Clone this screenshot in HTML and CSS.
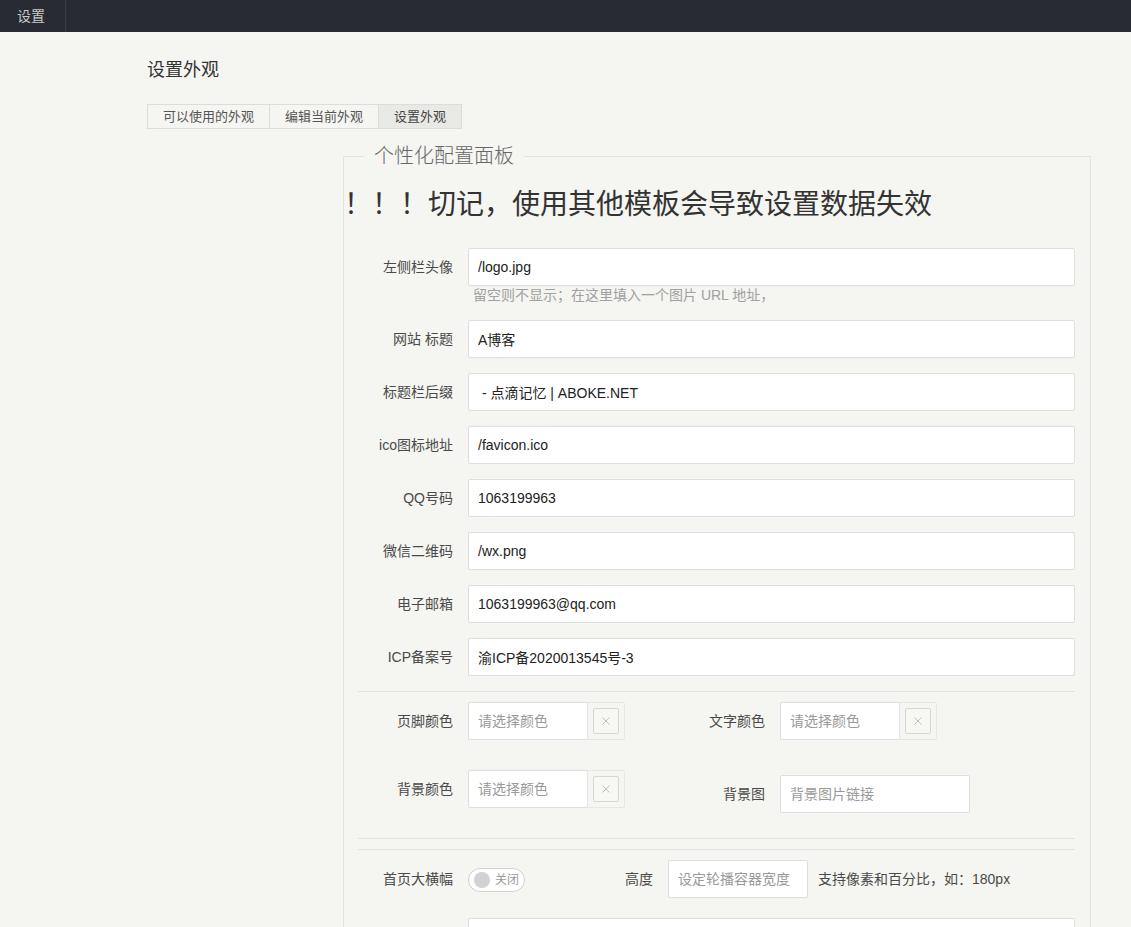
FILE: index.html
```html
<!DOCTYPE html>
<html lang="zh-CN">
<head>
<meta charset="utf-8">
<title>设置外观</title>
<link rel="stylesheet" href="styles.css">
</head>
<body>
<header class="topbar">
  <nav class="topnav"><a class="topnav-item">设置</a></nav>
</header>
<main class="main">
  <h2 class="page-title">设置外观</h2>
  <ul class="tabs">
    <li class="tab">可以使用的外观</li>
    <li class="tab">编辑当前外观</li>
    <li class="tab active">设置外观</li>
  </ul>
  <fieldset class="panel">
    <legend class="panel-legend">个性化配置面板</legend>
    <h1 class="warning">！！！切记，使用其他模板会导致设置数据失效</h1>
    <form class="panel-body">
      <div class="form-item first">
        <label class="form-label">左侧栏头像</label>
        <div class="input-block">
          <input class="input" value="/logo.jpg">
          <p class="help">留空则不显示；在这里填入一个图片 URL 地址，</p>
        </div>
      </div>
      <div class="form-item">
        <label class="form-label">网站 标题</label>
        <div class="input-block"><input class="input" value="A博客"></div>
      </div>
      <div class="form-item">
        <label class="form-label">标题栏后缀</label>
        <div class="input-block"><input class="input" value=" - 点滴记忆 | ABOKE.NET"></div>
      </div>
      <div class="form-item">
        <label class="form-label">ico图标地址</label>
        <div class="input-block"><input class="input" value="/favicon.ico"></div>
      </div>
      <div class="form-item">
        <label class="form-label">QQ号码</label>
        <div class="input-block"><input class="input" value="1063199963"></div>
      </div>
      <div class="form-item">
        <label class="form-label">微信二维码</label>
        <div class="input-block"><input class="input" value="/wx.png"></div>
      </div>
      <div class="form-item">
        <label class="form-label">电子邮箱</label>
        <div class="input-block"><input class="input" value="1063199963@qq.com"></div>
      </div>
      <div class="form-item">
        <label class="form-label">ICP备案号</label>
        <div class="input-block"><input class="input" value="渝ICP备2020013545号-3"></div>
      </div>

      <hr class="divider">

      <div class="inline-row row-colors-1">
        <div class="inline-item">
          <label class="form-label">页脚颜色</label>
          <div class="input-inline">
            <input class="input color-input" placeholder="请选择颜色">
            <span class="picker"><span class="picker-btn"><svg class="picker-x" viewBox="0 0 8 8" width="8" height="8"><path d="M0.5 0.5L7.5 7.5M7.5 0.5L0.5 7.5"/></svg></span></span>
          </div>
        </div>
        <div class="inline-item">
          <label class="form-label">文字颜色</label>
          <div class="input-inline">
            <input class="input color-input" placeholder="请选择颜色">
            <span class="picker"><span class="picker-btn"><svg class="picker-x" viewBox="0 0 8 8" width="8" height="8"><path d="M0.5 0.5L7.5 7.5M7.5 0.5L0.5 7.5"/></svg></span></span>
          </div>
        </div>
      </div>
      <div class="inline-row row-colors-2">
        <div class="inline-item">
          <label class="form-label">背景颜色</label>
          <div class="input-inline">
            <input class="input color-input" placeholder="请选择颜色">
            <span class="picker"><span class="picker-btn"><svg class="picker-x" viewBox="0 0 8 8" width="8" height="8"><path d="M0.5 0.5L7.5 7.5M7.5 0.5L0.5 7.5"/></svg></span></span>
          </div>
        </div>
        <div class="inline-item shifted">
          <label class="form-label">背景图</label>
          <div class="input-inline">
            <input class="input" placeholder="背景图片链接">
          </div>
        </div>
      </div>

      <hr class="divider">
      <hr class="divider">

      <div class="inline-row row-banner">
        <div class="inline-item switch-item">
          <label class="form-label">首页大横幅</label>
          <div class="switch-wrap">
            <span class="switch"><i class="switch-knob"></i><em class="switch-text">关闭</em></span>
          </div>
        </div>
        <div class="inline-item height-item">
          <label class="form-label">高度</label>
          <input class="input height-input" placeholder="设定轮播容器宽度">
          <span class="form-mid">支持像素和百分比，如：180px</span>
        </div>
      </div>
      <div class="form-item">
        <label class="form-label"></label>
        <div class="input-block"><input class="input"></div>
      </div>
    </form>
  </fieldset>
</main>
</body>
</html>
```

FILE: styles.css
```css
html, body {
  margin: 0;
  padding: 0;
}

body {
  background: #f5f5f1;
  font-family: "Liberation Sans", "Noto Sans CJK SC", sans-serif;
  font-size: 14px;
  color: #333;
  overflow: hidden;
}

.topbar {
  height: 32px;
  background: #282b33;
  display: flex;
}

.topnav {
  display: flex;
}

.topnav-item {
  display: block;
  padding: 0 20px 0 17px;
  line-height: 32px;
  height: 32px;
  color: #c8c8c8;
  border-right: 1px solid #393d46;
  font-size: 14px;
}

.main {
  padding: 0 0 40px 147px;
}

.page-title {
  margin: 26px 0 0;
  font-size: 18px;
  line-height: 24px;
  font-weight: normal;
  color: #333;
}

.tabs {
  display: flex;
  list-style: none;
  margin: 22px 0 0;
  padding: 0;
}

.tab {
  border: 1px solid #dcdcdc;
  height: 23px;
  line-height: 23px;
  padding: 0 15px;
  font-size: 13px;
  color: #555;
}

.tab + .tab {
  margin-left: -1px;
}

.tab.active {
  background: #e9e9e6;
  color: #444;
}

.panel {
  margin: 15px 0 0 196px;
  width: 748px;
  box-sizing: border-box;
  border: 1px solid #e2e2e2;
  padding: 0;
  min-width: 0;
}

.panel-legend {
  margin-left: 20px;
  padding: 0 10px;
  font-size: 20px;
  line-height: 24px;
  font-weight: 300;
  color: #666;
}

.warning {
  margin: 19px 0 25px 0;
  font-size: 28px;
  line-height: 36px;
  font-weight: normal;
  color: #333;
  white-space: nowrap;
}

.panel-body {
  padding: 0 15px 0 14px;
  display: block;
}

.form-item {
  display: flex;
  margin-bottom: 15px;
}

.form-label {
  flex: none;
  width: 80px;
  padding: 9px 15px;
  line-height: 20px;
  text-align: right;
  color: #4a4a4a;
  font-size: 14px;
}

.input-block {
  flex: 1;
  min-width: 0;
}

.input {
  display: block;
  width: 100%;
  height: 38px;
  box-sizing: border-box;
  border: 1px solid #dedede;
  border-radius: 2px;
  background: #fff;
  padding: 0 9px;
  font-family: "Liberation Sans", "Noto Sans CJK SC", sans-serif;
  font-size: 14px;
  color: #222;
  outline: none;
}

.input::placeholder {
  color: #9a9a9a;
}

.help {
  margin: 0;
  padding-left: 5px;
  line-height: 19px;
  font-size: 14px;
  color: #a0a0a0;
}

.divider {
  margin: 0 0 10px;
  border: 0;
  height: 1px;
  background: #e2e2e2;
}

.inline-row {
  display: flex;
  align-items: flex-start;
}

.row-colors-1 {
  margin-bottom: 30px;
}

.row-colors-2 {
  margin-bottom: 25px;
}

.row-banner {
  margin-bottom: 20px;
}

.inline-item {
  display: flex;
  align-items: flex-start;
  width: 312px;
}

.inline-item.shifted {
  margin-top: 5px;
}

.input-inline {
  display: flex;
  width: 190px;
}

.color-input {
  width: 120px;
  flex: none;
}

.picker {
  flex: none;
  width: 38px;
  height: 38px;
  box-sizing: border-box;
  margin-left: -1px;
  border: 1px solid #e6e6e6;
  border-radius: 2px;
  padding: 5px;
}

.picker-btn {
  display: flex;
  align-items: center;
  justify-content: center;
  width: 26px;
  height: 26px;
  box-sizing: border-box;
  border: 1px solid #d6d6d6;
  border-radius: 2px;
  background: #f7f7f4;
}

.picker-x path {
  stroke: #cdb9b9;
  stroke-width: 1;
  fill: none;
}

.switch-item {
  width: 200px;
}

.switch-wrap {
  padding-top: 8px;
}

.switch {
  display: flex;
  align-items: center;
  position: relative;
  height: 22px;
  padding: 0 5px;
  border: 1px solid #d2d2d2;
  border-radius: 20px;
  background: #fff;
}

.switch-knob {
  position: absolute;
  left: 5px;
  top: 3px;
  width: 16px;
  height: 16px;
  border-radius: 50%;
  background: #d2d2d2;
}

.switch-text {
  margin-left: 21px;
  font-style: normal;
  font-size: 12px;
  line-height: 22px;
  color: #999;
}

.height-item {
  width: auto;
}

.height-input {
  width: 140px;
  flex: none;
}

.form-mid {
  margin-left: 10px;
  line-height: 38px;
  color: #4a4a4a;
  font-size: 14px;
}
```
